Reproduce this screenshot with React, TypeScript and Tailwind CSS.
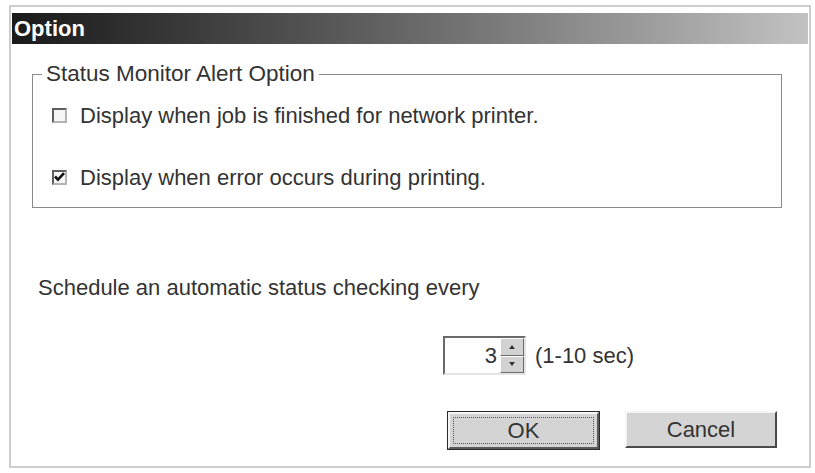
import React from "react";

const font = { fontFamily: '"Liberation Sans", Arial, sans-serif' };

const CheckBox = ({ checked }: { checked?: boolean }) => (
  <span className="flex h-[15px] w-[15px] shrink-0 items-center justify-center border-2 border-t-[#5e5e5e] border-l-[#5e5e5e] border-b-[#b4b4b4] border-r-[#b4b4b4] bg-[#f6f6f6]">
    {checked && (
      <svg width="11" height="10" viewBox="0 0 11 10">
        <path d="M1 4.5 L4 7.6 L10 1.2" fill="none" stroke="#111" strokeWidth="2.6" />
      </svg>
    )}
  </span>
);

const Option = ({ checked, label }: { checked?: boolean; label: string }) => (
  <label className="flex h-[30px] items-center pl-[19px]">
    <CheckBox checked={checked} />
    <span className="ml-[13px]">{label}</span>
  </label>
);

const SpinArrow = ({ up }: { up?: boolean }) => (
  <span className="flex flex-1 items-center justify-center border border-t-white border-l-white border-b-[#6a6a6a] border-r-[#6a6a6a] bg-[#d2d2d2]">
    <svg width="6" height="4" viewBox="0 0 6 4">
      <path d={up ? "M3 0 L6 4 L0 4 Z" : "M0 0 L6 0 L3 4 Z"} fill="#333" />
    </svg>
  </span>
);

const DialogButton = ({ label, isDefault }: { label: string; isDefault?: boolean }) => (
  <button
    type="button"
    className={
      isDefault
        ? "h-[39px] w-[153px] border border-[#2a2a2a] bg-[#d4d4d4] p-0"
        : "h-[37px] w-[152px] border-2 border-t-[#f4f4f4] border-l-[#f4f4f4] border-b-[#4a4a4a] border-r-[#4a4a4a] bg-[#d4d4d4] text-[22px] text-[#333]"
    }
  >
    {isDefault ? (
      <span className="flex h-full w-full border-2 border-t-[#f4f4f4] border-l-[#f4f4f4] border-b-[#5a5a5a] border-r-[#5a5a5a] p-[3px]">
        <span className="flex flex-1 items-center justify-center border border-dotted border-[#555] text-[22px] leading-none text-[#333]">
          {label}
        </span>
      </span>
    ) : (
      label
    )}
  </button>
);

export default function App() {
  return (
    <div className="h-[473px] w-[815px] overflow-hidden bg-white pl-[9px] pt-[5px]" style={font}>
      <div className="flex h-[463px] w-[802px] flex-col border-2 border-[#cdcdcd] px-px pt-[6px]">
        <div className="flex h-[31px] shrink-0 items-center bg-gradient-to-r from-[#1a1a1a] to-[#c2c2c2] pl-[2px] text-[22px] font-bold text-white">
          Option
        </div>
        <div className="flex flex-1 flex-col pl-[20px] pr-[26px] text-[22px] text-[#333]">
          <fieldset className="mt-[18px] border border-[#8a8a8a] pb-[15px]">
            <legend className="ml-[9px] px-[4px] text-[22.5px] leading-[24px]">Status Monitor Alert Option</legend>
            <div className="mt-[14px] flex flex-col gap-[32px]">
              <Option label="Display when job is finished for network printer." />
              <Option checked label="Display when error occurs during printing." />
            </div>
          </fieldset>
          <p className="ml-[6px] mt-[68px] leading-[24px]">Schedule an automatic status checking every</p>
          <div className="ml-[411px] mt-[36px] flex items-center">
            <div className="flex h-[39px] w-[83px] border-2 border-t-[#6a6a6a] border-l-[#6a6a6a] border-b-[#e4e4e4] border-r-[#e4e4e4] bg-white">
              <span className="flex flex-1 items-center justify-end pr-[3px]">3</span>
              <span className="flex w-[24px] flex-col">
                <SpinArrow up />
                <SpinArrow />
              </span>
            </div>
            <span className="ml-[9px]">(1-10 sec)</span>
          </div>
          <div className="mr-[5px] mt-[36px] flex justify-end gap-[25px]">
            <DialogButton isDefault label="OK" />
            <DialogButton label="Cancel" />
          </div>
        </div>
      </div>
    </div>
  );
}
